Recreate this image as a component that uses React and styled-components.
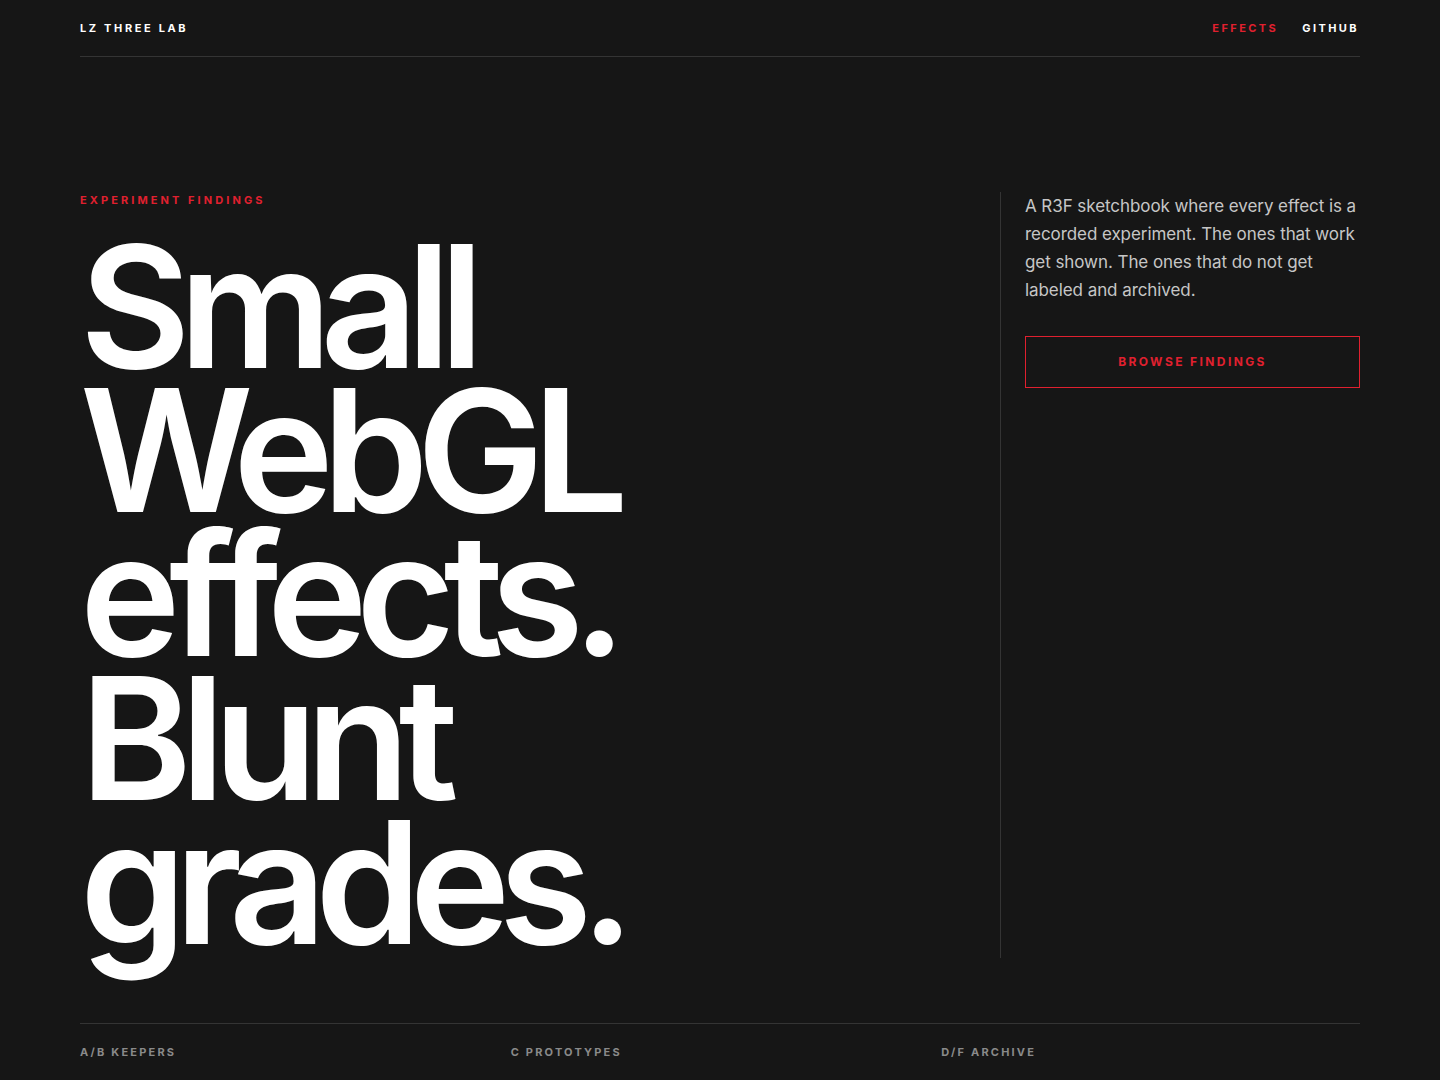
import React from 'react'
import styled, { createGlobalStyle } from 'styled-components'

const RED = '#e0202f'

const GlobalStyle = createGlobalStyle`
  html, body {
    margin: 0;
    padding: 0;
    background: #161616;
    font-family: Inter, "Noto Sans", sans-serif;
    -webkit-font-smoothing: antialiased;
  }
`

const Page = styled.div`
  min-height: 1080px;
  padding: 0 80px;
  background: #161616;
  color: #fff;
`

const Header = styled.header`
  display: flex;
  align-items: center;
  justify-content: space-between;
  height: 56px;
  border-bottom: 1px solid #343434;
`

const Brand = styled.div`
  font-size: 11px;
  font-weight: 700;
  letter-spacing: 0.24em;
  color: #fff;
`

const Nav = styled.nav`
  display: flex;
  gap: 24px;
  margin-right: 1px;
`

const NavLink = styled.a`
  font-size: 11px;
  font-weight: 700;
  letter-spacing: 0.22em;
  text-decoration: none;
  color: ${p => (p.$active ? RED : '#fff')};
`

const Hero = styled.section`
  display: grid;
  grid-template-columns: 1fr 360px;
  padding-top: 135px;
`

const Left = styled.div`
  display: flex;
  flex-direction: column;
`

const Eyebrow = styled.div`
  font-size: 11px;
  font-weight: 700;
  letter-spacing: 0.28em;
  color: ${RED};
  line-height: 16px;
`

const Title = styled.h1`
  margin: 26px 0 0;
  font-size: 170px;
  line-height: 144px;
  font-weight: 600;
  letter-spacing: -0.068em;
  color: #fff;
  padding-bottom: 4px;
`

const Aside = styled.aside`
  border-left: 1px solid #343434;
  padding-left: 24px;
`

const Lede = styled.p`
  margin: 0;
  font-size: 17px;
  line-height: 28px;
  color: #c6c6c6;
  letter-spacing: -0.004em;
`

const Button = styled.a`
  display: flex;
  align-items: center;
  justify-content: center;
  box-sizing: border-box;
  height: 52px;
  margin-top: 32px;
  padding-bottom: 1px;
  border: 1px solid ${RED};
  color: ${RED};
  font-size: 12px;
  font-weight: 700;
  letter-spacing: 0.2em;
  text-decoration: none;
`

const Footer = styled.footer`
  display: grid;
  grid-template-columns: repeat(3, 1fr);
  gap: 12px;
  margin-top: 65px;
  border-top: 1px solid #343434;
  padding-top: 21px;
`

const FootLabel = styled.div`
  font-size: 11px;
  font-weight: 700;
  letter-spacing: 0.2em;
  color: #8a8a8a;
`

const App = () => (
  <>
    <GlobalStyle />
    <Page>
      <Header>
        <Brand>LZ THREE LAB</Brand>
        <Nav>
          <NavLink href='#' $active>EFFECTS</NavLink>
          <NavLink href='#'>GITHUB</NavLink>
        </Nav>
      </Header>

      <Hero>
        <Left>
          <Eyebrow>EXPERIMENT FINDINGS</Eyebrow>
          <Title>
            Small<br />WebGL<br />effects.<br />Blunt<br />grades.
          </Title>
        </Left>
        <Aside>
          <Lede>
            A R3F sketchbook where every effect is a recorded experiment. The ones that work
            get shown. The ones that do not get labeled and archived.
          </Lede>
          <Button href='#'>BROWSE FINDINGS</Button>
        </Aside>
      </Hero>

      <Footer>
        <FootLabel>A/B KEEPERS</FootLabel>
        <FootLabel>C PROTOTYPES</FootLabel>
        <FootLabel>D/F ARCHIVE</FootLabel>
      </Footer>
    </Page>
  </>
)

export default App
